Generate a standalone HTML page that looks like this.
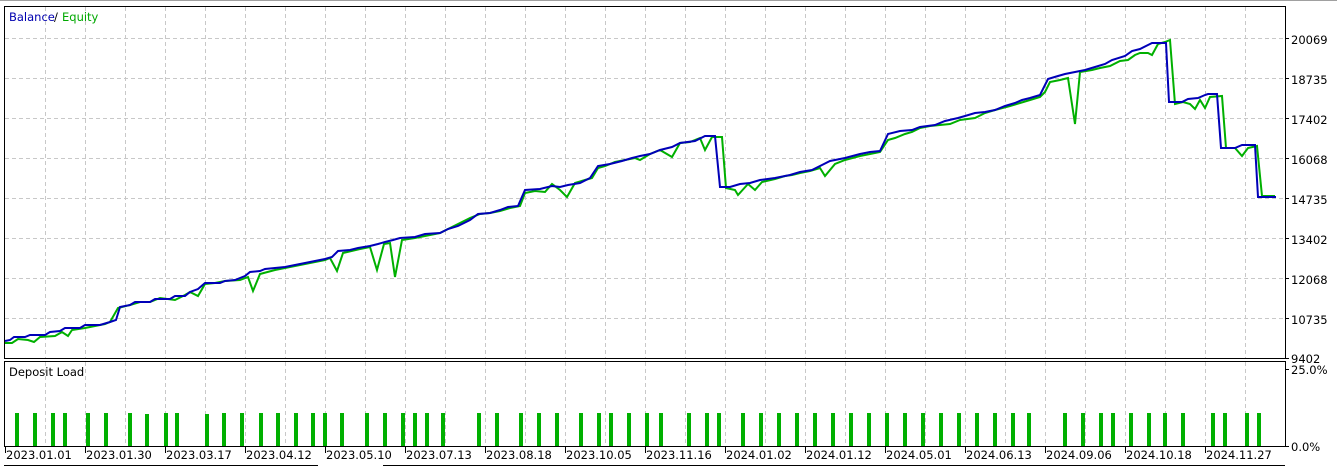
<!DOCTYPE html>
<html><head><meta charset="utf-8"><style>
html,body{margin:0;padding:0;background:#fff;width:1337px;height:467px;overflow:hidden}
svg{display:block}
text{font-family:"DejaVu Sans","Liberation Sans",sans-serif;font-size:11.5px}
</style></head><body>
<svg width="1337" height="467" viewBox="0 0 1337 467" xmlns="http://www.w3.org/2000/svg">
<rect x="0" y="0" width="1337" height="1" fill="#a0a0a0"/>
<g stroke="#c8c8c8" stroke-width="1" stroke-dasharray="4,3" shape-rendering="crispEdges">
<path d="M45.5 7V358M85.5 7V358M125.5 7V358M165.5 7V358M205.5 7V358M245.5 7V358M285.5 7V358M325.5 7V358M365.5 7V358M405.5 7V358M445.5 7V358M485.5 7V358M525.5 7V358M565.5 7V358M605.5 7V358M645.5 7V358M685.5 7V358M725.5 7V358M765.5 7V358M805.5 7V358M845.5 7V358M885.5 7V358M925.5 7V358M965.5 7V358M1005.5 7V358M1045.5 7V358M1085.5 7V358M1125.5 7V358M1165.5 7V358M1205.5 7V358M1245.5 7V358"/>
<path d="M5 38.5H1285M5 78.5H1285M5 118.5H1285M5 158.5H1285M5 198.5H1285M5 238.5H1285M5 278.5H1285M5 318.5H1285"/>
<path d="M45.5 362V446M85.5 362V446M125.5 362V446M165.5 362V446M205.5 362V446M245.5 362V446M285.5 362V446M325.5 362V446M365.5 362V446M405.5 362V446M445.5 362V446M485.5 362V446M525.5 362V446M565.5 362V446M605.5 362V446M645.5 362V446M685.5 362V446M725.5 362V446M765.5 362V446M805.5 362V446M845.5 362V446M885.5 362V446M925.5 362V446M965.5 362V446M1005.5 362V446M1045.5 362V446M1085.5 362V446M1125.5 362V446M1165.5 362V446M1205.5 362V446M1245.5 362V446"/>
</g>
<g fill="none" stroke="#000" stroke-width="1" shape-rendering="crispEdges">
<rect x="4.5" y="6.5" width="1281" height="352"/>
<rect x="4.5" y="361.5" width="1281" height="85"/>
<path d="M1285 38.5h4M1285 78.5h4M1285 118.5h4M1285 158.5h4M1285 198.5h4M1285 238.5h4M1285 278.5h4M1285 318.5h4M1285 358.5h4M1285 369.5h4M1285 446.5h4"/>
<path d="M4 465.5H318M383 465.5H1285"/>
<path d="M5.5 447v6M85.5 447v6M165.5 447v6M245.5 447v6M325.5 447v6M405.5 447v6M485.5 447v6M565.5 447v6M645.5 447v6M725.5 447v6M805.5 447v6M885.5 447v6M965.5 447v6M1045.5 447v6M1125.5 447v6M1205.5 447v6"/>
</g>
<text x="9" y="21" fill="#0000b0">Balance</text><text x="54" y="21" fill="#000">/</text><text x="62" y="21" fill="#00a800">Equity</text>
<text x="9" y="376" fill="#000">Deposit Load</text>
<g fill="#000">
<text x="1291" y="44">20069</text><text x="1291" y="84">18735</text><text x="1291" y="124">17402</text><text x="1291" y="164">16068</text><text x="1291" y="204">14735</text><text x="1291" y="244">13402</text><text x="1291" y="284">12068</text><text x="1291" y="324">10735</text><text x="1291" y="363">9402</text>
<text x="1291" y="374">25.0%</text><text x="1291" y="451">0.0%</text>
<text x="6" y="459">2023.01.01</text><text x="86" y="459">2023.01.30</text><text x="166" y="459">2023.03.17</text><text x="246" y="459">2023.04.12</text><text x="326" y="459">2023.05.10</text><text x="406" y="459">2023.07.13</text><text x="486" y="459">2023.08.18</text><text x="566" y="459">2023.10.05</text><text x="646" y="459">2023.11.16</text><text x="726" y="459">2024.01.02</text><text x="806" y="459">2024.01.12</text><text x="886" y="459">2024.05.01</text><text x="966" y="459">2024.06.13</text><text x="1046" y="459">2024.09.06</text><text x="1126" y="459">2024.10.18</text><text x="1206" y="459">2024.11.27</text>
</g>
<g fill="#00b000">
<rect x="15" y="413" width="4" height="33"/><rect x="33" y="413" width="4" height="33"/><rect x="51" y="413" width="4" height="33"/><rect x="63" y="413" width="4" height="33"/><rect x="86" y="413" width="4" height="33"/><rect x="104" y="413" width="4" height="33"/><rect x="128" y="413" width="4" height="33"/><rect x="145" y="414" width="4" height="32"/><rect x="164" y="413" width="4" height="33"/><rect x="175" y="413" width="4" height="33"/><rect x="205" y="414" width="4" height="32"/><rect x="222" y="413" width="4" height="33"/><rect x="240" y="413" width="4" height="33"/><rect x="259" y="413" width="4" height="33"/><rect x="276" y="413" width="4" height="33"/><rect x="294" y="413" width="4" height="33"/><rect x="311" y="413" width="4" height="33"/><rect x="323" y="413" width="4" height="33"/><rect x="340" y="413" width="4" height="33"/><rect x="365" y="413" width="4" height="33"/><rect x="383" y="413" width="4" height="33"/><rect x="401" y="413" width="4" height="33"/><rect x="413" y="413" width="4" height="33"/><rect x="425" y="413" width="4" height="33"/><rect x="441" y="413" width="4" height="33"/><rect x="477" y="413" width="4" height="33"/><rect x="495" y="413" width="4" height="33"/><rect x="519" y="413" width="4" height="33"/><rect x="537" y="413" width="4" height="33"/><rect x="555" y="413" width="4" height="33"/><rect x="579" y="413" width="4" height="33"/><rect x="597" y="413" width="4" height="33"/><rect x="609" y="413" width="4" height="33"/><rect x="627" y="413" width="4" height="33"/><rect x="645" y="413" width="4" height="33"/><rect x="659" y="413" width="4" height="33"/><rect x="687" y="413" width="4" height="33"/><rect x="705" y="413" width="4" height="33"/><rect x="717" y="413" width="4" height="33"/><rect x="741" y="413" width="4" height="33"/><rect x="759" y="413" width="4" height="33"/><rect x="777" y="413" width="4" height="33"/><rect x="795" y="413" width="4" height="33"/><rect x="813" y="413" width="4" height="33"/><rect x="831" y="413" width="4" height="33"/><rect x="849" y="413" width="4" height="33"/><rect x="867" y="413" width="4" height="33"/><rect x="885" y="413" width="4" height="33"/><rect x="903" y="413" width="4" height="33"/><rect x="921" y="413" width="4" height="33"/><rect x="939" y="413" width="4" height="33"/><rect x="957" y="413" width="4" height="33"/><rect x="975" y="413" width="4" height="33"/><rect x="993" y="413" width="4" height="33"/><rect x="1011" y="413" width="4" height="33"/><rect x="1027" y="413" width="4" height="33"/><rect x="1063" y="413" width="4" height="33"/><rect x="1081" y="413" width="4" height="33"/><rect x="1099" y="413" width="4" height="33"/><rect x="1111" y="413" width="4" height="33"/><rect x="1129" y="413" width="4" height="33"/><rect x="1147" y="413" width="4" height="33"/><rect x="1163" y="413" width="4" height="33"/><rect x="1181" y="413" width="4" height="33"/><rect x="1211" y="413" width="4" height="33"/><rect x="1223" y="413" width="4" height="33"/><rect x="1245" y="413" width="4" height="33"/><rect x="1257" y="413" width="4" height="33"/>
</g>
<polyline fill="none" stroke="#00b000" stroke-width="2" points="5,343 12,343 18,339 28,340 34,342 40,337 55,336 62,332 68,336 72,330 85,328 95,326 105,324 110,322 118,308 130,305 140,302 150,302 160,298 175,300 185,295 190,292 198,296 205,284 215,283 225,281 240,280 248,277 253,291 260,274 275,270 285,268 300,265 310,263 325,260 330,258 337,271 343,253 360,249 370,247 377,270 384,244 390,243 395,277 402,240 415,238 425,236 440,233 450,228 470,218 480,214 490,213 500,211 510,208 520,206 525,193 535,191 545,192 552,184 560,190 567,197 575,183 585,180 592,178 598,168 605,166 615,162 625,160 635,158 640,160 650,154 660,150 672,157 680,143 690,142 700,138 705,150 712,137 722,137 726,188 735,190 738,195 748,184 755,190 762,182 775,179 785,176 792,175 800,173 810,171 820,168 825,176 835,164 845,160 860,156 870,154 880,152 888,140 895,138 905,134 912,132 920,128 930,126 940,125 950,124 960,120 975,118 985,113 995,110 1010,106 1020,103 1030,100 1040,97 1045,92 1050,82 1060,80 1068,78 1075,124 1080,72 1092,70 1100,68 1110,66 1120,61 1128,60 1135,55 1140,53 1148,53 1152,55 1158,44 1165,42 1170,40 1175,104 1183,102 1190,104 1195,109 1200,100 1205,108 1210,97 1222,96 1226,148 1235,148 1242,156 1248,148 1257,146 1262,196 1275,196"/>
<polyline fill="none" stroke="#0000b8" stroke-width="2" points="5,341 10,340 14,337 25,337 30,335 45,335 50,332 60,331 65,328 80,328 85,325 100,325 110,322 116,320 120,307 130,305 135,302 150,302 155,299 170,299 175,296 185,296 190,292 198,289 205,283 220,283 225,281 235,280 245,276 250,272 260,271 265,269 285,267 300,264 315,261 325,259 332,257 338,251 350,250 358,248 370,246 378,244 385,242 393,240 400,238 415,237 425,234 440,233 448,229 458,226 470,220 478,214 490,213 500,210 508,207 518,206 525,190 540,189 552,186 560,187 568,185 580,183 590,178 598,166 610,164 622,161 632,158 640,156 650,154 660,150 672,147 680,143 695,141 705,136 715,136 720,187 730,187 740,184 750,183 760,180 775,178 790,175 800,172 812,170 822,165 830,161 845,158 860,154 870,152 880,151 888,134 900,131 912,130 920,127 935,125 945,121 958,118 965,116 975,113 985,112 995,110 1005,106 1015,103 1022,100 1030,98 1040,95 1048,79 1058,76 1065,74 1075,72 1085,70 1095,67 1105,64 1112,60 1125,56 1132,51 1140,49 1150,44 1152,43 1166,43 1169,102 1182,102 1188,99 1198,98 1205,95 1208,94 1217,94 1221,148 1235,148 1242,145 1255,145 1258,197 1276,197"/>
</svg>
</body></html>
